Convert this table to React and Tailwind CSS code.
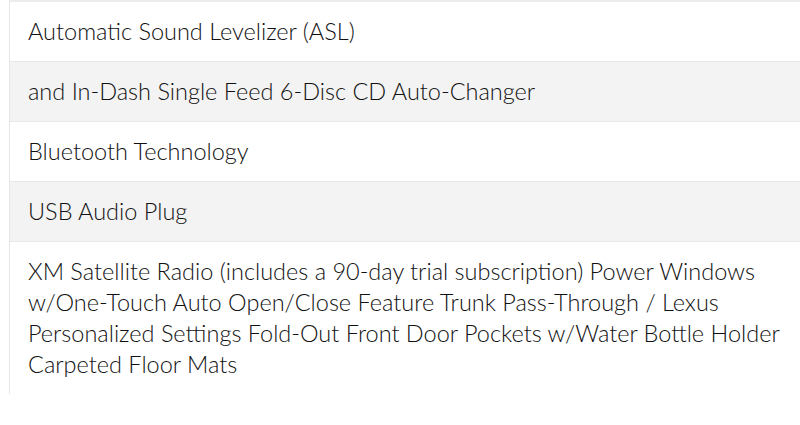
import React from "react";

const rows = [
  "Automatic Sound Levelizer (ASL)",
  "and In-Dash Single Feed 6-Disc CD Auto-Changer",
  "Bluetooth Technology",
  "USB Audio Plug",
  "XM Satellite Radio (includes a 90-day trial subscription) Power Windows w/One-Touch Auto Open/Close Feature Trunk Pass-Through / Lexus Personalized Settings Fold-Out Front Door Pockets w/Water Bottle Holder Carpeted Floor Mats",
];

export default function App() {
  return (
    <div className="w-[800px] h-[425px] bg-white overflow-hidden font-['Lato',sans-serif] text-[#111111]">
      <div className="ml-[9px] border-l border-[#e6e6e6] border-t-2 border-t-[#ececec]">
        {rows.map((text, i) => (
          <div
            key={i}
            className={`pl-[18px] pr-[20px] py-[14px] text-[23.5px] font-light leading-[31px] border-b border-[#e8e8e8] ${
              i % 2 === 1 ? "bg-[#f3f3f3]" : "bg-white"
            } ${i === rows.length - 1 ? "border-b-0" : ""}`}
          >
            {text}
          </div>
        ))}
      </div>
    </div>
  );
}
